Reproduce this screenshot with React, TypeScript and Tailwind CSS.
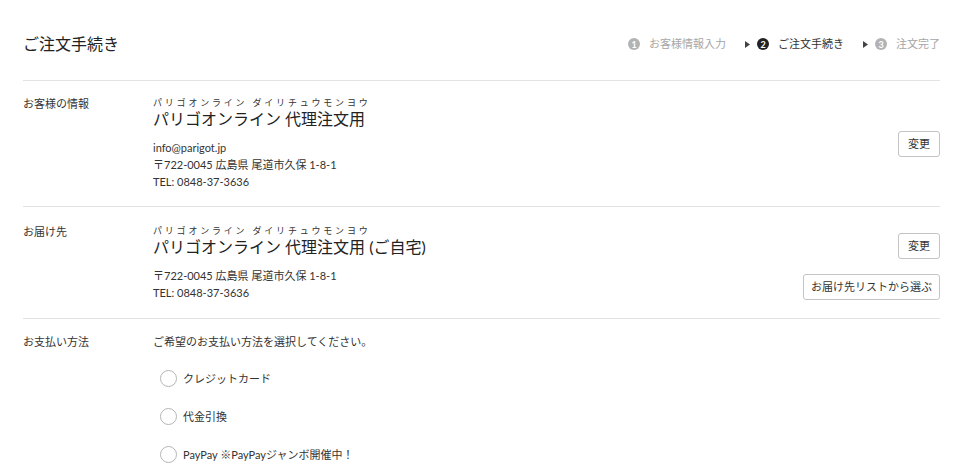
import type { ReactNode } from 'react'

const FONT = "font-['Lato','Noto_Sans_CJK_JP',sans-serif]"

const STEPS = [
  { num: 1, label: 'お客様情報入力', active: false },
  { num: 2, label: 'ご注文手続き', active: true },
  { num: 3, label: '注文完了', active: false },
]

const PAYMENT_OPTIONS = ['クレジットカード', '代金引換', 'PayPay ※PayPayジャンボ開催中！']

const StepArrow = () => (
  <svg width="5" height="7" viewBox="0 0 5 7">
    <path d="M0 0 L5 3.5 L0 7 Z" fill="#444" />
  </svg>
)

const Steps = () => (
  <div className="flex items-center text-[11px] leading-[14px]">
    {STEPS.map((step, index) => (
      <div key={step.num} className="flex items-center">
        {index > 0 ? (
          <div className="ml-[19px] mr-[7px] flex items-center">
            <StepArrow />
          </div>
        ) : null}
        <span
          className={`flex h-[12px] w-[12px] items-center justify-center rounded-full text-[9px] font-bold leading-none text-white ${
            step.active ? 'bg-[#222]' : 'bg-[#b3b3b3]'
          }`}
        >
          {step.num}
        </span>
        <span className={`ml-[9px] ${step.active ? 'text-[#333]' : 'text-[#a6a6a6]'}`}>{step.label}</span>
      </div>
    ))}
  </div>
)

const OutlineButton = ({ children, className = '' }: { children: ReactNode; className?: string }) => (
  <button
    type="button"
    className={`flex h-[26px] items-center rounded-[3px] border border-[#c4c4c4] bg-white text-[11px] text-[#333] ${className}`}
  >
    {children}
  </button>
)

const Section = ({
  label,
  children,
  actions,
  className = '',
}: {
  label: string
  children: ReactNode
  actions?: ReactNode
  className?: string
}) => (
  <section className={`flex border-t border-[#e3e3e3] ${className}`}>
    <div className="w-[130px] shrink-0 text-[11px] leading-[14px] text-[#333]">{label}</div>
    <div className="min-w-0 flex-1">{children}</div>
    {actions ? <div className="flex flex-col items-end">{actions}</div> : null}
  </section>
)

const NameBlock = ({ name }: { name: string }) => (
  <div>
    <div className="text-[9px] leading-[12px] tracking-[2.8px] text-[#333]">パリゴオンライン ダイリチュウモンヨウ</div>
    <div className="text-[16px] leading-[19px] text-[#222]">{name}</div>
  </div>
)

const App = () => {
  return (
    <div className={`${FONT} min-h-screen bg-white pl-[23px] pr-[34px] text-[#333]`}>
      <header className="flex items-center justify-between pb-[26px] pt-[34px]">
        <h1 className="text-[16px] leading-[20px] text-[#222]">ご注文手続き</h1>
        <Steps />
      </header>

      <Section
        label="お客様の情報"
        className="pb-[16px] pt-[16px]"
        actions={<OutlineButton className="mt-[34px] px-[9px]">変更</OutlineButton>}
      >
        <NameBlock name="パリゴオンライン 代理注文用" />
        <div className="mt-[11px] text-[11px] leading-[17px]">
          <div>info@parigot.jp</div>
          <div>〒722-0045 広島県 尾道市久保 1-8-1</div>
          <div>TEL: 0848-37-3636</div>
        </div>
      </Section>

      <Section
        label="お届け先"
        className="pb-[17px] pt-[18px]"
        actions={
          <>
            <OutlineButton className="mt-[8px] px-[9px]">変更</OutlineButton>
            <OutlineButton className="mt-[15px] px-[7px]">お届け先リストから選ぶ</OutlineButton>
          </>
        }
      >
        <NameBlock name="パリゴオンライン 代理注文用 (ご自宅)" />
        <div className="mt-[11px] text-[11px] leading-[17px]">
          <div>〒722-0045 広島県 尾道市久保 1-8-1</div>
          <div>TEL: 0848-37-3636</div>
        </div>
      </Section>

      <Section label="お支払い方法" className="pb-[24px] pt-[16px]">
        <p className="text-[11px] leading-[14px]">ご希望のお支払い方法を選択してください。</p>
        <div className="ml-[7px] mt-[21px] flex flex-col gap-[21px]">
          {PAYMENT_OPTIONS.map((option) => (
            <label key={option} className="flex items-center text-[11px] leading-[17px]">
              <span className="h-[17px] w-[17px] shrink-0 rounded-full border border-[#b5b5b5] bg-white" />
              <span className="ml-[6px]">{option}</span>
            </label>
          ))}
        </div>
      </Section>
    </div>
  )
}

export default App
